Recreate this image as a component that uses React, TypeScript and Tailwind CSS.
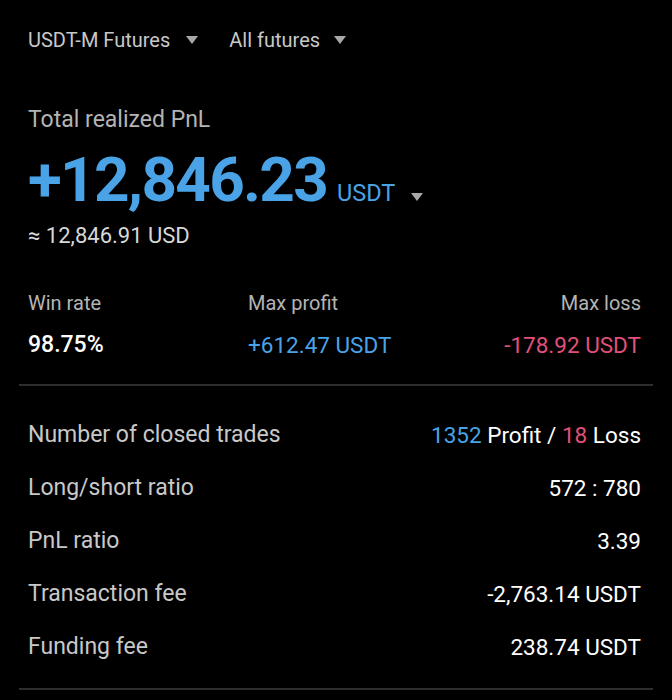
import React from "react";

const Caret = ({ className = "" }: { className?: string }) => (
  <svg width="12" height="8" viewBox="0 0 12 8" className={className}>
    <path d="M0 0 H12 L6 8 Z" fill="currentColor" />
  </svg>
);

const rows: { label: string; value: React.ReactNode }[] = [
  {
    label: "Number of closed trades",
    value: (
      <>
        <span className="text-[#4aa3e6]">1352</span> Profit /{" "}
        <span className="text-[#e0517a]">18</span> Loss
      </>
    ),
  },
  { label: "Long/short ratio", value: "572 : 780" },
  { label: "PnL ratio", value: "3.39" },
  { label: "Transaction fee", value: "-2,763.14 USDT" },
  { label: "Funding fee", value: "238.74 USDT" },
];

export default function App() {
  return (
    <div
      className="w-[672px] h-[700px] bg-black text-white overflow-hidden"
      style={{ fontFamily: "Roboto, 'Liberation Sans', sans-serif" }}
    >
      <div className="pl-[28px] pr-[31px] pt-[27px]">
        <div className="flex items-center text-[20px] leading-[26px] text-[#c8c8c8]">
          <span>USDT-M Futures</span>
          <Caret className="ml-[16px] text-[#a8a8a8]" />
          <span className="ml-[31px]">All futures</span>
          <Caret className="ml-[14px] text-[#a8a8a8]" />
        </div>

        <div className="mt-[53px] text-[23px] leading-[28px] text-[#b4b4b4]">
          Total realized PnL
        </div>
        <div className="mt-[15px] flex items-baseline text-[#4aa3e6] h-[62px]">
          <span className="text-[62px] leading-[62px] font-bold tracking-[-1.7px]">
            +12,846.23
          </span>
          <span className="ml-[10px] text-[23.5px] leading-[28px]">USDT</span>
          <Caret className="ml-[16px] mb-[4px] text-[#a8a8a8]" />
        </div>
        <div className="mt-[11px] text-[22px] leading-[28px] text-[#d8d8d8]">
          ≈ 12,846.91 USD
        </div>

        <div className="mt-[40px] grid grid-cols-[220px_1fr_auto]">
          <div>
            <div className="text-[20px] leading-[26px] text-[#b4b4b4]">Win rate</div>
            <div className="mt-[15px] text-[23px] leading-[28px] font-medium text-white">
              98.75%
            </div>
          </div>
          <div>
            <div className="text-[20px] leading-[26px] text-[#b4b4b4]">Max profit</div>
            <div className="mt-[15px] text-[22.5px] leading-[28px] text-[#4aa3e6]">
              +612.47 USDT
            </div>
          </div>
          <div className="text-right">
            <div className="text-[20px] leading-[26px] text-[#b4b4b4]">Max loss</div>
            <div className="mt-[15px] text-[22.5px] leading-[28px] text-[#e0517a]">
              -178.92 USDT
            </div>
          </div>
        </div>
      </div>

      <div className="mx-[19px] mt-[25px] h-[2px] bg-[#2e2e2e]" />

      <div className="pl-[28px] pr-[31px] pt-[35px] flex flex-col gap-[25px]">
        {rows.map((r) => (
          <div key={r.label} className="flex justify-between text-[23px] leading-[28px]">
            <span className="text-[#c8c8c8]">{r.label}</span>
            <span className="text-white text-[22.5px]">{r.value}</span>
          </div>
        ))}
      </div>

      <div className="mx-[19px] mt-[27px] h-[2px] bg-[#2e2e2e]" />
    </div>
  );
}
